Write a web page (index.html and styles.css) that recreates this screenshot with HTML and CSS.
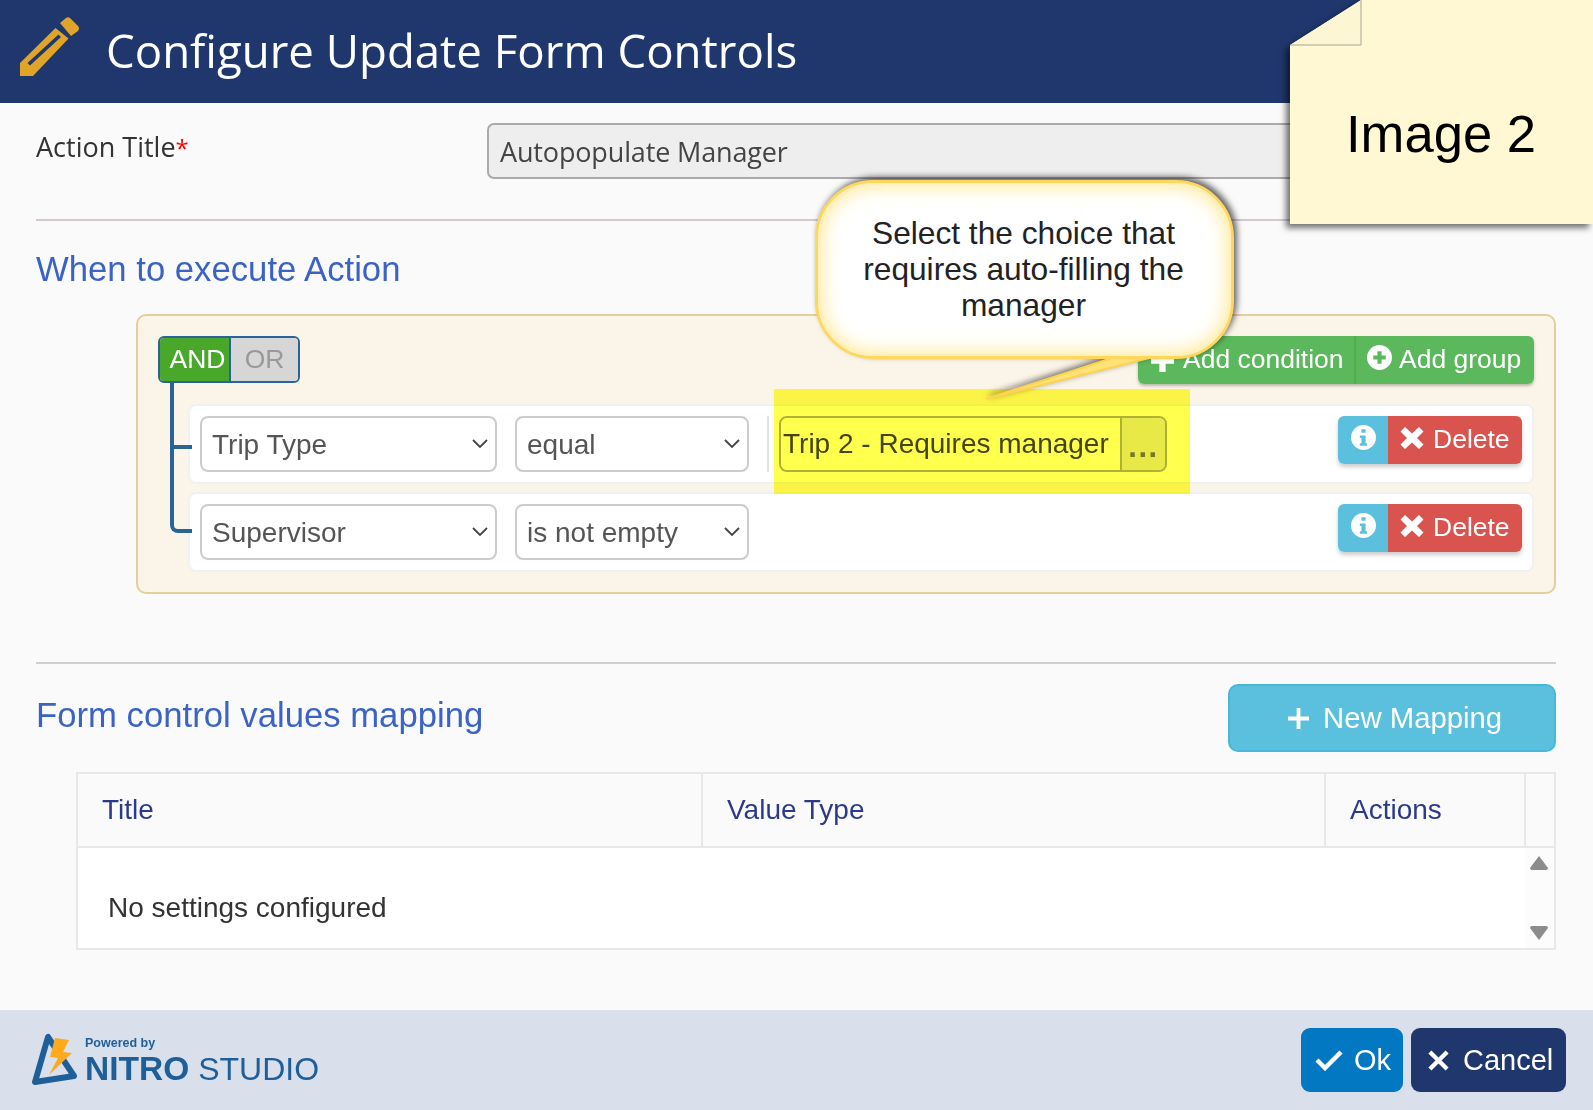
FILE: index.html
```html
<!DOCTYPE html>
<html lang="en">
<head>
<meta charset="utf-8">
<title>Configure Update Form Controls</title>
<link rel="stylesheet" href="styles.css">
</head>
<body>
<div class="page">
  <header class="top">
    <svg class="pencil" viewBox="0 0 60 60" width="60" height="60" aria-hidden="true">
      <path fill="#e0a526" fill-rule="evenodd" d="M0 46 35.500 11 48.500 21.500 13 59H0ZM7.500 46 10 48.500 41 20 38.500 17.500Z"/>
      <path fill="#e0a526" d="M40 6 46 1Q48-.500 50 1L58 9Q60 11 58 14L51 19Z"/>
    </svg>
    <h1>Configure Update Form Controls</h1>
  </header>

  <main class="content">
    <div class="field">
      <label class="field-label">Action Title<span class="req">*</span></label>
      <div class="text-input">Autopopulate Manager</div>
    </div>
    <hr class="rule rule-a">
    <h2 class="section-title first">When to execute Action</h2>

    <section class="builder">
      <div class="builder-head">
        <div class="toggle"><span class="tg-and">AND</span><span class="tg-or">OR</span></div>
        <div class="btn-pair">
          <span class="btn green">
            <svg class="ico ico-plus" viewBox="0 0 24 24" width="25" height="25"><path fill="#fff" d="M9 1h6v8h8v6h-8v8H9v-8H1V9h8z"/></svg>Add condition</span>
          <span class="btn green split">
            <svg class="ico" viewBox="0 0 24 24" width="25" height="25"><path fill="#fff" fill-rule="evenodd" d="M12 0a12 12 0 1 0 0 24 12 12 0 0 0 0-24ZM10 6h4v4h4v4h-4v4h-4v-4H6v-4h4Z"/></svg>Add group</span>
        </div>
      </div>

      <div class="qrow qrow-1">
        <div class="sel sel-a">Trip Type<svg class="chev" viewBox="0 0 16 10" width="16" height="10"><path d="M1 1l7 7 7-7" fill="none" stroke="#444" stroke-width="1.800"/></svg></div>
        <div class="sel sel-b">equal<svg class="chev" viewBox="0 0 16 10" width="16" height="10"><path d="M1 1l7 7 7-7" fill="none" stroke="#444" stroke-width="1.800"/></svg></div>
        <div class="sep"></div>
        <div class="lookup"><span class="lookup-text">Trip 2 - Requires manager</span><span class="lookup-btn">...</span></div>
        <div class="row-actions">
          <span class="act info"><svg viewBox="0 0 24 24" width="25" height="25"><path fill="#fff" fill-rule="evenodd" d="M12 0a12 12 0 1 0 0 24 12 12 0 0 0 0-24ZM10 4h4v3.500h-4ZM8.500 10H14v7.500h1.500V20h-7v-2.500H10V12.500H8.500Z"/></svg></span>
          <span class="act del"><svg viewBox="0 0 24 24" width="24" height="24"><path fill="#fff" d="M5 1l7 6.500L19 1l4.500 4.500L17 12l6.500 6.500L19 23l-7-6.500L5 23 .5 18.500 7 12 .5 5.500z"/></svg><span class="del-label">Delete</span></span>
        </div>
      </div>

      <div class="qrow qrow-2">
        <div class="sel sel-a">Supervisor<svg class="chev" viewBox="0 0 16 10" width="16" height="10"><path d="M1 1l7 7 7-7" fill="none" stroke="#444" stroke-width="1.800"/></svg></div>
        <div class="sel sel-b">is not empty<svg class="chev" viewBox="0 0 16 10" width="16" height="10"><path d="M1 1l7 7 7-7" fill="none" stroke="#444" stroke-width="1.800"/></svg></div>
        <div class="row-actions">
          <span class="act info"><svg viewBox="0 0 24 24" width="25" height="25"><path fill="#fff" fill-rule="evenodd" d="M12 0a12 12 0 1 0 0 24 12 12 0 0 0 0-24ZM10 4h4v3.500h-4ZM8.500 10H14v7.500h1.500V20h-7v-2.500H10V12.500H8.500Z"/></svg></span>
          <span class="act del"><svg viewBox="0 0 24 24" width="24" height="24"><path fill="#fff" d="M5 1l7 6.500L19 1l4.500 4.500L17 12l6.500 6.500L19 23l-7-6.500L5 23 .5 18.500 7 12 .5 5.500z"/></svg><span class="del-label">Delete</span></span>
        </div>
      </div>
    </section>

    <hr class="rule rule-b">
    <div class="map-head">
      <h2 class="section-title">Form control values mapping</h2>
      <span class="new-map"><svg viewBox="0 0 22 22" width="21" height="21"><path fill="#fff" d="M9 0h4v9h9v4h-9v9H9v-9H0V9h9z"/></svg>New Mapping</span>
    </div>

    <div class="grid">
      <div class="th">Title</div>
      <div class="th">Value Type</div>
      <div class="th">Actions</div>
      <div class="th th-end"></div>
      <div class="empty">No settings configured</div>
      <div class="scroll">
        <svg viewBox="0 0 18 14" width="18" height="14"><path fill="#8c8c8c" d="M9 0 18 12Q18 14 16 14H2Q0 14 0 12Z"/></svg>
        <svg viewBox="0 0 18 14" width="18" height="14"><path fill="#8c8c8c" d="M9 14 0 2Q0 0 2 0H16Q18 0 18 2Z"/></svg>
      </div>
    </div>
  </main>

  <footer class="bottom">
    <div class="logo">
      <svg class="logo-mark" viewBox="0 0 46 53" width="46" height="53" aria-hidden="true">
        <path fill="none" stroke="#1f5f99" stroke-width="6" stroke-linejoin="round" d="M17 4 4 49 43 43Z"/>
        <path fill="#fdaa1c" d="M24 5 38 7 32 19 41 20 18 42 27 25 19 24Z"/>
      </svg>
      <div class="logo-text">
        <span class="powered">Powered by</span>
        <span class="brand"><b>NITRO</b><span class="studio">STUDIO</span></span>
      </div>
    </div>
    <div class="foot-btns">
      <span class="foot-btn ok"><svg viewBox="0 0 28 22" width="28" height="22"><path fill="none" stroke="#fff" stroke-width="4.500" d="M2 11l8 8L26 3"/></svg>Ok</span>
      <span class="foot-btn cancel"><svg viewBox="0 0 22 22" width="21" height="21"><path fill="none" stroke="#fff" stroke-width="4.500" d="M2 2l18 18M20 2 2 20"/></svg>Cancel</span>
    </div>
  </footer>

  <div class="highlight"></div>

  <div class="callout">
    <svg class="tail" viewBox="0 0 200 60" width="200" height="60" aria-hidden="true">
      <path fill="#ffe27a" stroke="#ffd34d" stroke-width="2" d="M127 2 1 43 188 -4Z"/>
    </svg>
    <p class="callout-text">Select the choice that requires auto-filling the manager</p>
  </div>

  <aside class="note">
    <div class="note-sheet">
      <svg class="note-fold" viewBox="0 0 72 46" width="72" height="46" aria-hidden="true">
        <path fill="#fdf6d3" d="M71 0V45H0Z"/>
        <path fill="none" stroke="#a8a58f" stroke-width="1" d="M71 0V45H0"/>
      </svg>
      <span class="note-text">Image 2</span>
    </div>
  </aside>
</div>
</body>
</html>
```
FILE: styles.css
```css
* { box-sizing: border-box; }
html, body { margin: 0; padding: 0; }
body {
  font-family: "Liberation Sans", Arial, sans-serif;
  background: #fafafa;
  color: #333;
}
.page {
  position: relative;
  width: 1593px;
  height: 1110px;
  display: flex;
  flex-direction: column;
  overflow: hidden;
}

/* header */
.top {
  height: 103px;
  background: #20376e;
  display: flex;
  align-items: center;
  padding-left: 20px;
  flex: none;
}
.pencil { margin-top: -9px; }
.top h1 {
  margin: 0 0 2px 26px;
  font: 400 45.600px/1 "Open Sans", sans-serif;
  color: #fff;
}

/* main */
.content {
  flex: 1;
  padding: 20px 37px 0 36px;
}
.field { display: flex; }
.field-label {
  width: 451px;
  font: 400 27px/1 "Open Sans", sans-serif;
  color: #333;
  padding-top: 10px;
}
.req { color: #f00; font-size: 24px; }
.text-input {
  flex: 1;
  height: 56px;
  background: #eee;
  border: 2px solid #aaa;
  border-radius: 7px;
  padding: 0 11px;
  font: 400 27px/54px "Open Sans", sans-serif;
  letter-spacing: -0.15px;
  color: #444;
}
.rule { border: 0; height: 2px; margin: 0; }
.rule-a { background: #d2c9ca; margin-top: 40px; }
.rule-b { background: #cfcfcf; margin-top: 68px; }
.section-title {
  margin: 0;
  font-weight: 400;
  font-size: 34.700px;
  line-height: 40px;
  color: #3a63c5;
}
.section-title.first { margin-top: 28px; }

/* builder */
.builder {
  margin: 25px 0 0 100px;
  height: 280px;
  background: #fbf4e8;
  border: 2px solid #e3cf9e;
  border-radius: 10px;
  padding: 20px 22px 20px 21px;
}
.builder-head {
  display: flex;
  justify-content: space-between;
  margin-bottom: 20px;
  height: 48px;
}
.toggle {
  display: flex;
  width: 142px;
  height: 47px;
  margin-left: -1px;
  border: 2px solid #2a6497;
  border-radius: 6px;
  overflow: hidden;
  font-size: 26.500px;
  line-height: 43px;
  text-align: center;
}
.tg-and { width: 71px; padding-left: 6px; background: #49a82a; color: #fff; border-right: 2px solid #2a6497; }
.tg-or { flex: 1; background: #d6d6d6; color: #999; }
.btn-pair {
  display: flex;
  height: 48px;
  border-radius: 6px;
  box-shadow: 0 2px 3px rgba(0,0,0,.25);
  overflow: hidden;
  margin-right: -2px;
}
.btn {
  display: flex;
  align-items: center;
  color: #fff;
  font-size: 26.500px;
  white-space: nowrap;
  padding-bottom: 2px;
}
.btn.green { background: #5cb85c; width: 216px; padding-left: 12px; gap: 8px; }
.btn.green.split { width: 180px; border-left: 2px solid #4cae4c; padding-left: 11px; gap: 7px; }
.btn .ico { flex: none; margin-top: -4px; }
.btn .ico-plus { margin-top: 2px; }

.qrow {
  position: relative;
  display: flex;
  height: 80px;
  margin: 0 -2px 0 29px;
  padding: 10px 10px 10px 10px;
  background: #fff;
  border: 2px solid #f1f1f1;
  border-radius: 8px;
}
.qrow-2 { margin-top: 8px; }
.qrow::before {
  content: "";
  position: absolute;
  left: -20px;
  width: 18px;
  border-left: 4px solid #2a6497;
  border-bottom: 4px solid #2a6497;
}
.qrow-1::before { top: -23px; height: 62px; }
.qrow-2::before { top: -48px; height: 83px; border-bottom-left-radius: 8px; }

.sel {
  position: relative;
  height: 56px;
  background: #fff;
  border: 2px solid #ccc;
  border-radius: 8px;
  padding-left: 10px;
  font-size: 28px;
  line-height: 54px;
  color: #555;
}
.sel-a { width: 297px; }
.sel-b { width: 234px; margin-left: 18px; }
.chev { position: absolute; right: 7px; top: 21px; }
.sep { width: 2px; height: 56px; background: #e3e3e3; margin-left: 18px; }
.lookup {
  display: flex;
  height: 56px;
  width: 388px;
  margin-left: 10px;
  border: 2px solid #b0b0b0;
  border-radius: 8px;
  overflow: hidden;
  font-size: 28px;
  line-height: 52px;
  color: #444;
}
.lookup-text { width: 341px; padding-left: 2px; background: #fff; white-space: nowrap; border-right: 2px solid #b0b0b0; }
.lookup-btn { flex: 1; background: #e8e8e8; color: #777; text-align: center; font-weight: 700; font-size: 31px; line-height: 57px; letter-spacing: 1.500px; }
.row-actions {
  margin-left: auto;
  display: flex;
  height: 48px;
  border-radius: 6px;
  overflow: hidden;
  box-shadow: 0 3px 4px rgba(0,0,0,.2);
}
.act { display: flex; align-items: center; color: #fff; font-size: 26.500px; }
.act.info { width: 50px; background: #5bc0de; justify-content: center; }
.act.info svg { margin-top: -6px; }
.act.del { width: 134px; background: #d9534f; padding-left: 12px; gap: 9px; }
.act.del svg { margin-top: -4px; }
.del-label { margin-top: -2px; }

/* mapping */
.map-head {
  display: flex;
  justify-content: space-between;
  margin-top: 20px;
  height: 68px;
}
.map-head .section-title { margin-top: 11px; }
.new-map {
  width: 328px;
  height: 68px;
  background: #5bc0de;
  border: 2px solid #46b8da;
  border-radius: 10px;
  color: #fff;
  font-size: 29.300px;
  display: flex;
  align-items: center;
  padding-left: 58px;
  gap: 14px;
}
.grid {
  margin: 20px 0 0 40px;
  height: 178px;
  background: #fff;
  border: 2px solid #e8e8e8;
  display: grid;
  grid-template-columns: 625px 623px 200px 1fr;
  grid-template-rows: 74px 1fr;
}
.th {
  background: #fafafa;
  border-right: 2px solid #e8e8e8;
  border-bottom: 2px solid #e8e8e8;
  padding-left: 24px;
  font-size: 28px;
  line-height: 71px;
  color: #2c3a8c;
}
.th-end { border-right: 0; }
.empty {
  grid-column: 1 / 4;
  padding: 44px 0 0 30px;
  font-size: 28px;
  line-height: 32px;
  color: #333;
}
.scroll {
  background: #fcfcfc;
  padding: 8px 0 8px 4px;
  display: flex;
  flex-direction: column;
  justify-content: space-between;
}

/* footer */
.bottom {
  flex: none;
  height: 100px;
  background: #d9dfeb;
  display: flex;
  justify-content: space-between;
  padding: 18px 27px 0 31px;
}
.logo { display: flex; align-items: flex-start; padding-top: 5px; }
.logo-text { display: flex; flex-direction: column; margin-left: 8px; color: #1f5f99; }
.powered { font-size: 12.500px; font-weight: 700; line-height: 14px; margin-top: 3px; }
.brand { font-size: 33.500px; line-height: 38px; white-space: nowrap; }
.brand b { font-weight: 700; }
.studio { font-size: 32px; margin-left: 9px; }
.foot-btns { display: flex; gap: 8px; }
.foot-btn {
  height: 64px;
  border-radius: 9px;
  color: #fff;
  font-size: 29px;
  display: flex;
  align-items: center;
}
.foot-btn.ok { width: 102px; background: #0277c2; padding-left: 14px; gap: 11px; }
.foot-btn.cancel { width: 155px; background: #20376e; padding-left: 17px; gap: 14px; }

/* overlays */
.highlight {
  position: absolute;
  left: 774px;
  top: 389px;
  width: 416px;
  height: 105px;
  background: #ffff4d;
  mix-blend-mode: multiply;
}
.callout {
  position: absolute;
  left: 815px;
  top: 180px;
  width: 419px;
  height: 179px;
  filter: drop-shadow(3px -3px 3px rgba(0,0,0,.6));
}
.callout-text {
  position: relative;
  margin: 0;
  height: 100%;
  background: #fff;
  border: 3px solid #ffd75e;
  border-radius: 58px;
  box-shadow: inset 0 0 22px #ffe070;
  padding: 32px 36px 0 34px;
  text-align: center;
  font-size: 31.700px;
  line-height: 36px;
  color: #222;
}
.tail { position: absolute; left: 170px; top: 176px; overflow: visible; }
.note {
  position: absolute;
  right: 0;
  top: 0;
  width: 303px;
  height: 224px;
  filter: drop-shadow(-4px 4px 3px rgba(0,0,0,.55));
}
.note-sheet {
  position: relative;
  width: 100%;
  height: 100%;
  background: #fff8d2;
  clip-path: polygon(0 45px, 71px 0, 100% 0, 100% 100%, 0 100%);
}
.note-fold { position: absolute; left: 0; top: 0; }
.note-text {
  position: absolute;
  left: 56px;
  top: 104px;
  font-size: 52.600px;
  line-height: 60px;
  color: #000;
}
```
